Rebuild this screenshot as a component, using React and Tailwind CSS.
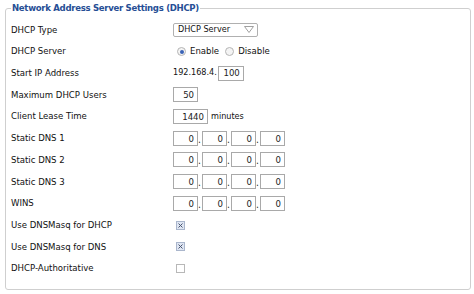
import React from 'react';

const font = { fontFamily: '"DejaVu Sans Condensed", "DejaVu Sans", Verdana, sans-serif', fontStretch: 'condensed' };

const Box = ({ value, w = 'w-[25px]' }) => (
  <span className={`inline-flex h-[15px] ${w} items-center justify-end border border-[#a9a9a9] bg-white pr-[3px] text-[9.5px] leading-none text-[#222]`}>
    {value}
  </span>
);

const IpBoxes = () => (
  <div className="flex items-end">
    {[0, 1, 2, 3].map(i => (
      <React.Fragment key={i}>
        <Box value="0" />
        {i < 3 && <span className="w-[4px] text-[10px] leading-[12px] text-[#222]">.</span>}
      </React.Fragment>
    ))}
  </div>
);

const Radio = ({ checked, label }) => (
  <label className="flex items-center gap-[4px]">
    <span className="flex h-[9px] w-[9px] items-center justify-center rounded-full border border-[#b5b5b5] bg-[#f4f4f4]">
      {checked && <span className="h-[4px] w-[4px] rounded-full bg-[#3a63b6]" />}
    </span>
    <span>{label}</span>
  </label>
);

const Check = ({ checked }) => (
  <span className={`ml-[3px] flex h-[9px] w-[9px] items-center justify-center border ${checked ? 'border-[#aab6cc] bg-[#dfe6f3]' : 'border-[#b8b8b8] bg-white'}`}>
    {checked && (
      <svg width="5" height="5" viewBox="0 0 5 5">
        <path d="M0.5 0.5 L4.5 4.5 M4.5 0.5 L0.5 4.5" stroke="#4b5670" strokeWidth="1" />
      </svg>
    )}
  </span>
);

const Row = ({ label, children }) => (
  <div className="flex h-[21.7px] items-center">
    <div className="w-[162px]">{label}</div>
    <div className="flex items-center">{children}</div>
  </div>
);

export default function App() {
  return (
    <div className="h-[294px] w-[474px] bg-white pt-[1px] text-[9.5px] text-[#111]" style={font}>
      <fieldset className="ml-[5px] w-[466px] rounded-[3px] border border-[#cfcfcf] px-[5px] pb-[10px]">
        <legend className="px-[1px] text-[9.5px] font-bold leading-[14px] tracking-[-0.3px] text-[#264e95]">
          Network Address Server Settings (DHCP)
        </legend>
        <div className="pt-[4px]">
          <Row label="DHCP Type">
            <div className="flex h-[14px] w-[85px] items-center justify-between rounded-[2px] border border-[#b0b0b0] bg-white pl-[4px] pr-[3px] text-[9px]">
              <span>DHCP Server</span>
              <svg width="10" height="7" viewBox="0 0 10 7">
                <path d="M0.5 0.5 H9.5 L5 6.5 Z" fill="none" stroke="#a0a0a0" strokeWidth="1" />
              </svg>
            </div>
          </Row>
          <Row label="DHCP Server">
            <div className="ml-[4px] flex items-center gap-[6px]">
              <Radio checked label="Enable" />
              <Radio label="Disable" />
            </div>
          </Row>
          <Row label="Start IP Address">
            <span className="mr-[1px] text-[9px]">192.168.4.</span>
            <Box value="100" w="w-[26px]" />
          </Row>
          <Row label="Maximum DHCP Users">
            <Box value="50" />
          </Row>
          <Row label="Client Lease Time">
            <Box value="1440" w="w-[35px]" />
            <span className="ml-[3px] text-[9px]">minutes</span>
          </Row>
          <Row label="Static DNS 1"><IpBoxes /></Row>
          <Row label="Static DNS 2"><IpBoxes /></Row>
          <Row label="Static DNS 3"><IpBoxes /></Row>
          <Row label="WINS"><IpBoxes /></Row>
          <Row label="Use DNSMasq for DHCP"><Check checked /></Row>
          <Row label="Use DNSMasq for DNS"><Check checked /></Row>
          <Row label="DHCP-Authoritative"><Check /></Row>
        </div>
      </fieldset>
    </div>
  );
}
